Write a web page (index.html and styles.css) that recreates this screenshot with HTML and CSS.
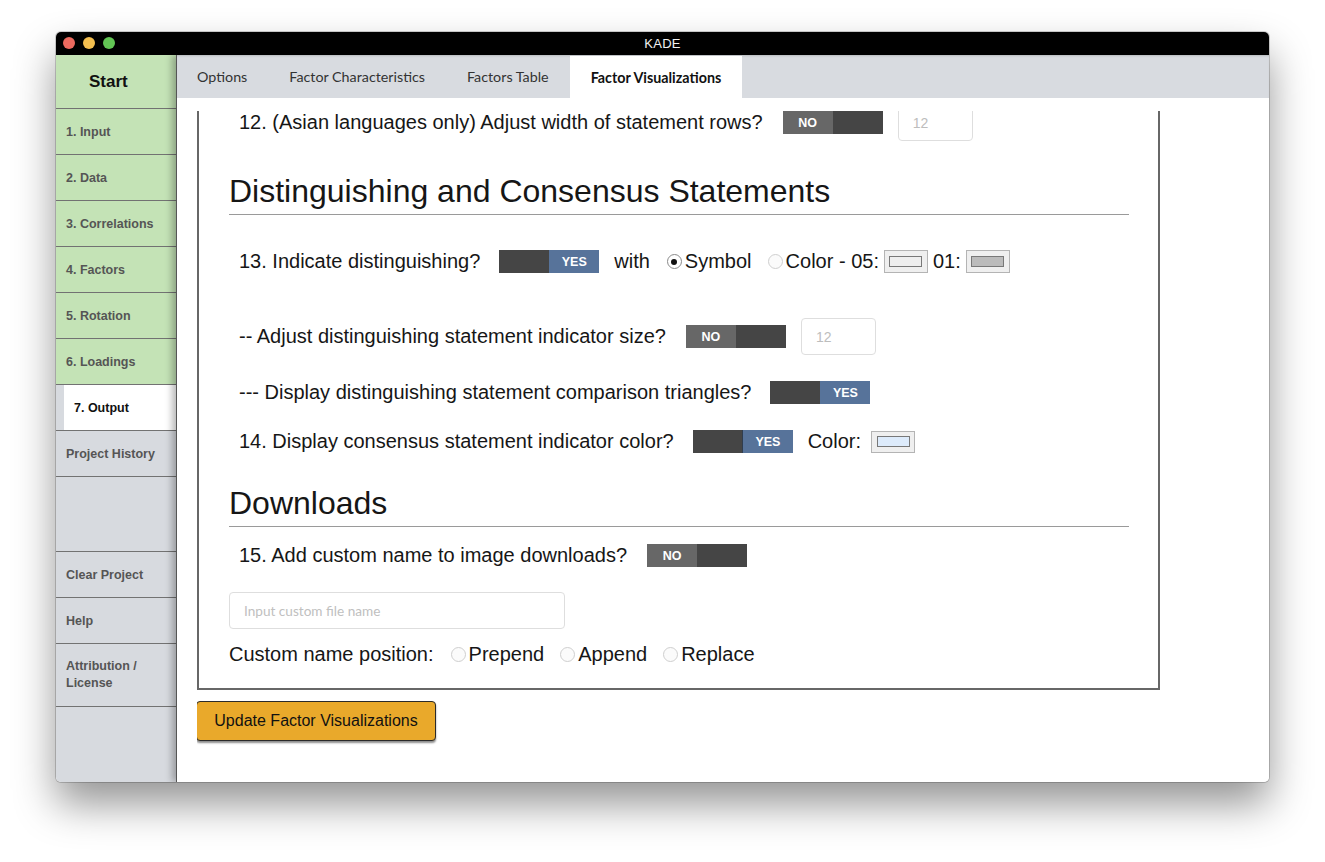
FILE: index.html
```html
<!DOCTYPE html>
<html>
<head>
<meta charset="utf-8">
<title>KADE</title>
<link rel="stylesheet" href="styles.css">
</head>
<body>
<div class="window">
  <div class="titlebar">
    <div class="lights">
      <span class="light red"></span>
      <span class="light yellow"></span>
      <span class="light green"></span>
    </div>
    <span class="title">KADE</span>
  </div>
  <div class="app">
    <nav class="sidebar">
      <div class="nav-start">Start</div>
      <div class="nav-item done">1. Input</div>
      <div class="nav-item done">2. Data</div>
      <div class="nav-item done">3. Correlations</div>
      <div class="nav-item done">4. Factors</div>
      <div class="nav-item done">5. Rotation</div>
      <div class="nav-item done">6. Loadings</div>
      <div class="nav-item current"><span class="current-box">7. Output</span></div>
      <div class="nav-item">Project History</div>
      <div class="nav-spacer"></div>
      <div class="nav-item">Clear Project</div>
      <div class="nav-item">Help</div>
      <div class="nav-item tall">Attribution /<br>License</div>
    </nav>
    <main class="main">
      <div class="tabs">
        <div class="tab first-tab">Options</div>
        <div class="tab">Factor Characteristics</div>
        <div class="tab">Factors Table</div>
        <div class="tab active">Factor Visualizations</div>
      </div>
      <div class="content">
        <div class="scroller">
          <section class="panel">
            <div class="row first">
              <span>12. (Asian languages only) Adjust width of statement rows?</span>
              <span class="toggle off"><span class="seg lit">NO</span><span class="seg"></span></span>
              <span class="numbox">12</span>
            </div>

            <h2 class="section-title t1">Distinguishing and Consensus Statements</h2>

            <div class="row r13">
              <span>13. Indicate distinguishing?</span>
              <span class="toggle on"><span class="seg"></span><span class="seg lit">YES</span></span>
              <span class="word">with</span>
              <span class="radio checked"></span><span class="rlabel">Symbol</span>
              <span class="radio"></span><span class="rlabel">Color - 05:</span>
              <span class="colorbox"><span class="swatch s05"></span></span>
              <span class="word small">01:</span>
              <span class="colorbox"><span class="swatch s01"></span></span>
            </div>

            <div class="row r-size">
              <span>-- Adjust distinguishing statement indicator size?</span>
              <span class="toggle off"><span class="seg lit">NO</span><span class="seg"></span></span>
              <span class="numbox">12</span>
            </div>

            <div class="row r-tri">
              <span>--- Display distinguishing statement comparison triangles?</span>
              <span class="toggle on"><span class="seg"></span><span class="seg lit">YES</span></span>
            </div>

            <div class="row r14">
              <span>14. Display consensus statement indicator color?</span>
              <span class="toggle on split"><span class="seg"></span><span class="seg lit">YES</span></span>
              <span class="word">Color:</span>
              <span class="colorbox c14"><span class="swatch s14"></span></span>
            </div>

            <h2 class="section-title t2">Downloads</h2>

            <div class="row r15">
              <span>15. Add custom name to image downloads?</span>
              <span class="toggle off"><span class="seg lit">NO</span><span class="seg"></span></span>
            </div>

            <div class="filebox">Input custom file name</div>

            <div class="row r-pos flush">
              <span>Custom name position:</span>
              <span class="radio gap"></span><span class="rlabel">Prepend</span>
              <span class="radio"></span><span class="rlabel">Append</span>
              <span class="radio"></span><span class="rlabel">Replace</span>
            </div>
          </section>
          <button class="update">Update Factor Visualizations</button>
        </div>
      </div>
    </main>
  </div>
</div>
</body>
</html>
```

FILE: styles.css
```css
html, body {
  margin: 0;
  padding: 0;
  background: #ffffff;
}

body {
  font-family: "Liberation Sans", Arial, Helvetica, sans-serif;
  color: #161616;
  padding: 32px 0 0 56px;
  height: 862px;
  box-sizing: border-box;
  overflow: hidden;
}

.window {
  width: 1213px;
  height: 750px;
  border-radius: 5px;
  overflow: hidden;
  display: flex;
  flex-direction: column;
  background: #ffffff;
  box-shadow: 0 22px 42px rgba(0, 0, 0, 0.42), 0 0 0 1px rgba(0, 0, 0, 0.18);
}

/* title bar */
.titlebar {
  height: 23px;
  flex: none;
  background: #000000;
  position: relative;
  display: flex;
  align-items: center;
  justify-content: center;
}

.title {
  color: #f2f2f2;
  font-size: 13px;
  letter-spacing: 0.3px;
}

.lights {
  position: absolute;
  left: 7px;
  top: 5px;
  display: flex;
  gap: 8px;
}

.light {
  width: 12px;
  height: 12px;
  border-radius: 50%;
  display: block;
}
.light.red { background: #ec6a5f; }
.light.yellow { background: #f4bf4f; }
.light.green { background: #62c554; }

/* app */
.app {
  flex: 1;
  display: flex;
  min-height: 0;
}

.sidebar {
  width: 120px;
  flex: none;
  background: #d7dadf;
  display: flex;
  flex-direction: column;
}

.nav-start {
  height: 53px;
  border-bottom: 1px solid #727272;
  background: #c4e3b6;
  display: flex;
  align-items: center;
  padding-left: 33px;
  font-weight: bold;
  font-size: 17px;
  color: #111;
}

.nav-item {
  height: 45px;
  border-bottom: 1px solid #727272;
  display: flex;
  align-items: center;
  padding-left: 10px;
  font-weight: bold;
  font-size: 12.5px;
  color: #555;
}

.nav-item.done {
  background: #c4e3b6;
}

.nav-item.current {
  padding-left: 8px;
  align-items: stretch;
}

.current-box {
  flex: 1;
  background: #ffffff;
  display: flex;
  align-items: center;
  padding-left: 10px;
  color: #111;
}

.nav-item.tall {
  height: 62px;
  line-height: 17px;
}

.nav-spacer {
  height: 74px;
  border-bottom: 1px solid #727272;
}

.main {
  flex: 1;
  min-width: 0;
  border-left: 1px solid #555;
  position: relative;
  z-index: 1;
  box-shadow: -4px 0 7px rgba(0, 0, 0, 0.28);
  background: #ffffff;
  display: flex;
  flex-direction: column;
}

.tabs {
  height: 43px;
  flex: none;
  background: #d8dbe0;
  display: flex;
  font-family: Lato, "Open Sans", sans-serif;
  font-size: 14.3px;
  box-shadow: inset 0 2px 2px -1px rgba(0, 0, 0, 0.15);
}

.tab {
  padding: 0 21px;
  display: flex;
  align-items: center;
  color: #333;
}

.tab.first-tab {
  padding-left: 20px;
}

.tab.active {
  background: #ffffff;
  font-weight: bold;
  color: #111;
  margin-top: 1px;
}

.content {
  flex: 1;
  min-height: 0;
  padding: 13px 0 0 20px;
}

.scroller {
  height: 100%;
  overflow: hidden;
}

.panel {
  width: 963px;
  box-sizing: border-box;
  border: 2px solid #676767;
  border-top: none;
  padding: 0 29px 15px 30px;
}

.row {
  display: flex;
  align-items: center;
  height: 37px;
  padding-left: 10px;
  font-size: 20px;
  white-space: nowrap;
}

.row.flush { padding-left: 0; }

.row.first { margin-top: -7px; }
.r13 { margin-top: 28px; }
.r-size { margin-top: 38px; }
.r-tri { margin-top: 19px; }
.r14 { margin-top: 12px; }
.r15 { margin-top: 10px; }
.r-pos { margin-top: 7px; }

.section-title {
  margin: 0;
  font-size: 32px;
  font-weight: normal;
  line-height: 36px;
  padding-bottom: 5px;
  border-bottom: 1px solid #9a9a9a;
  color: #161616;
}

.t1 { margin-top: 32px; }
.t2 { margin-top: 25px; }

/* toggle */
.toggle {
  display: flex;
  width: 100px;
  height: 23px;
  margin-left: 20px;
  background: #454545;
}

.r13 .toggle,
.r-tri .toggle,
.r14 .toggle {
  margin-left: 19px;
}

.toggle .seg {
  width: 50px;
  display: flex;
  align-items: center;
  justify-content: center;
  font-size: 12.5px;
  font-weight: bold;
  color: #ffffff;
}

.toggle.off .seg.lit { background: #676767; }
.toggle.on .seg.lit { background: #57739a; }
.toggle.split .seg.lit { border-left: 1px solid #2f3d50; }

.numbox {
  width: 75px;
  height: 37px;
  box-sizing: border-box;
  border: 1px solid #dedede;
  border-radius: 4px;
  margin-left: 15px;
  display: flex;
  align-items: center;
  padding-left: 14px;
  font-size: 14px;
  color: #bdbdbd;
}

.word { margin-left: 15px; }
.word.small { margin-left: 5px; }

.radio {
  width: 13px;
  height: 13px;
  border: 1px solid #cfcfcf;
  border-radius: 50%;
  background: #fbfbfb;
  margin-left: 16px;
  display: flex;
  align-items: center;
  justify-content: center;
  flex: none;
}

.radio.gap { margin-left: 17px; }

.radio.checked {
  border-color: #8a8a8a;
  background: #ffffff;
}

.radio.checked::after {
  content: "";
  width: 6px;
  height: 6px;
  border-radius: 50%;
  background: #111;
}

.r13 .radio.checked { margin-left: 17px; }

.rlabel { margin-left: 3px; }

.colorbox {
  width: 44px;
  height: 23px;
  box-sizing: border-box;
  border: 1px solid #b4b4b4;
  background: #efefef;
  margin-left: 5px;
  display: flex;
  align-items: center;
  justify-content: center;
}

.colorbox.c14 {
  margin-left: 10px;
  height: 22px;
}

.swatch {
  width: 33px;
  height: 11px;
  box-sizing: border-box;
  border: 1px solid #787878;
}

.s05 { background: #eeeeee; }
.s01 { background: #bbbbbb; }
.s14 { background: #ddebfb; }

.filebox {
  width: 336px;
  height: 37px;
  box-sizing: border-box;
  margin-top: 18px;
  border: 1px solid #dedede;
  border-radius: 4px;
  display: flex;
  align-items: center;
  padding-left: 14px;
  font-family: Lato, "Open Sans", sans-serif;
  font-size: 13.6px;
  color: #c0c0c0;
}

.update {
  margin-top: 11px;
  margin-left: -1px;
  width: 240px;
  height: 40px;
  box-sizing: border-box;
  background: #e9a92b;
  border: 1px solid #2a2a2a;
  border-radius: 4px;
  box-shadow: 0 2px 2px rgba(0, 0, 0, 0.45);
  font-family: "Liberation Sans", Arial, sans-serif;
  font-size: 16px;
  color: #111;
  padding: 0;
}
```
